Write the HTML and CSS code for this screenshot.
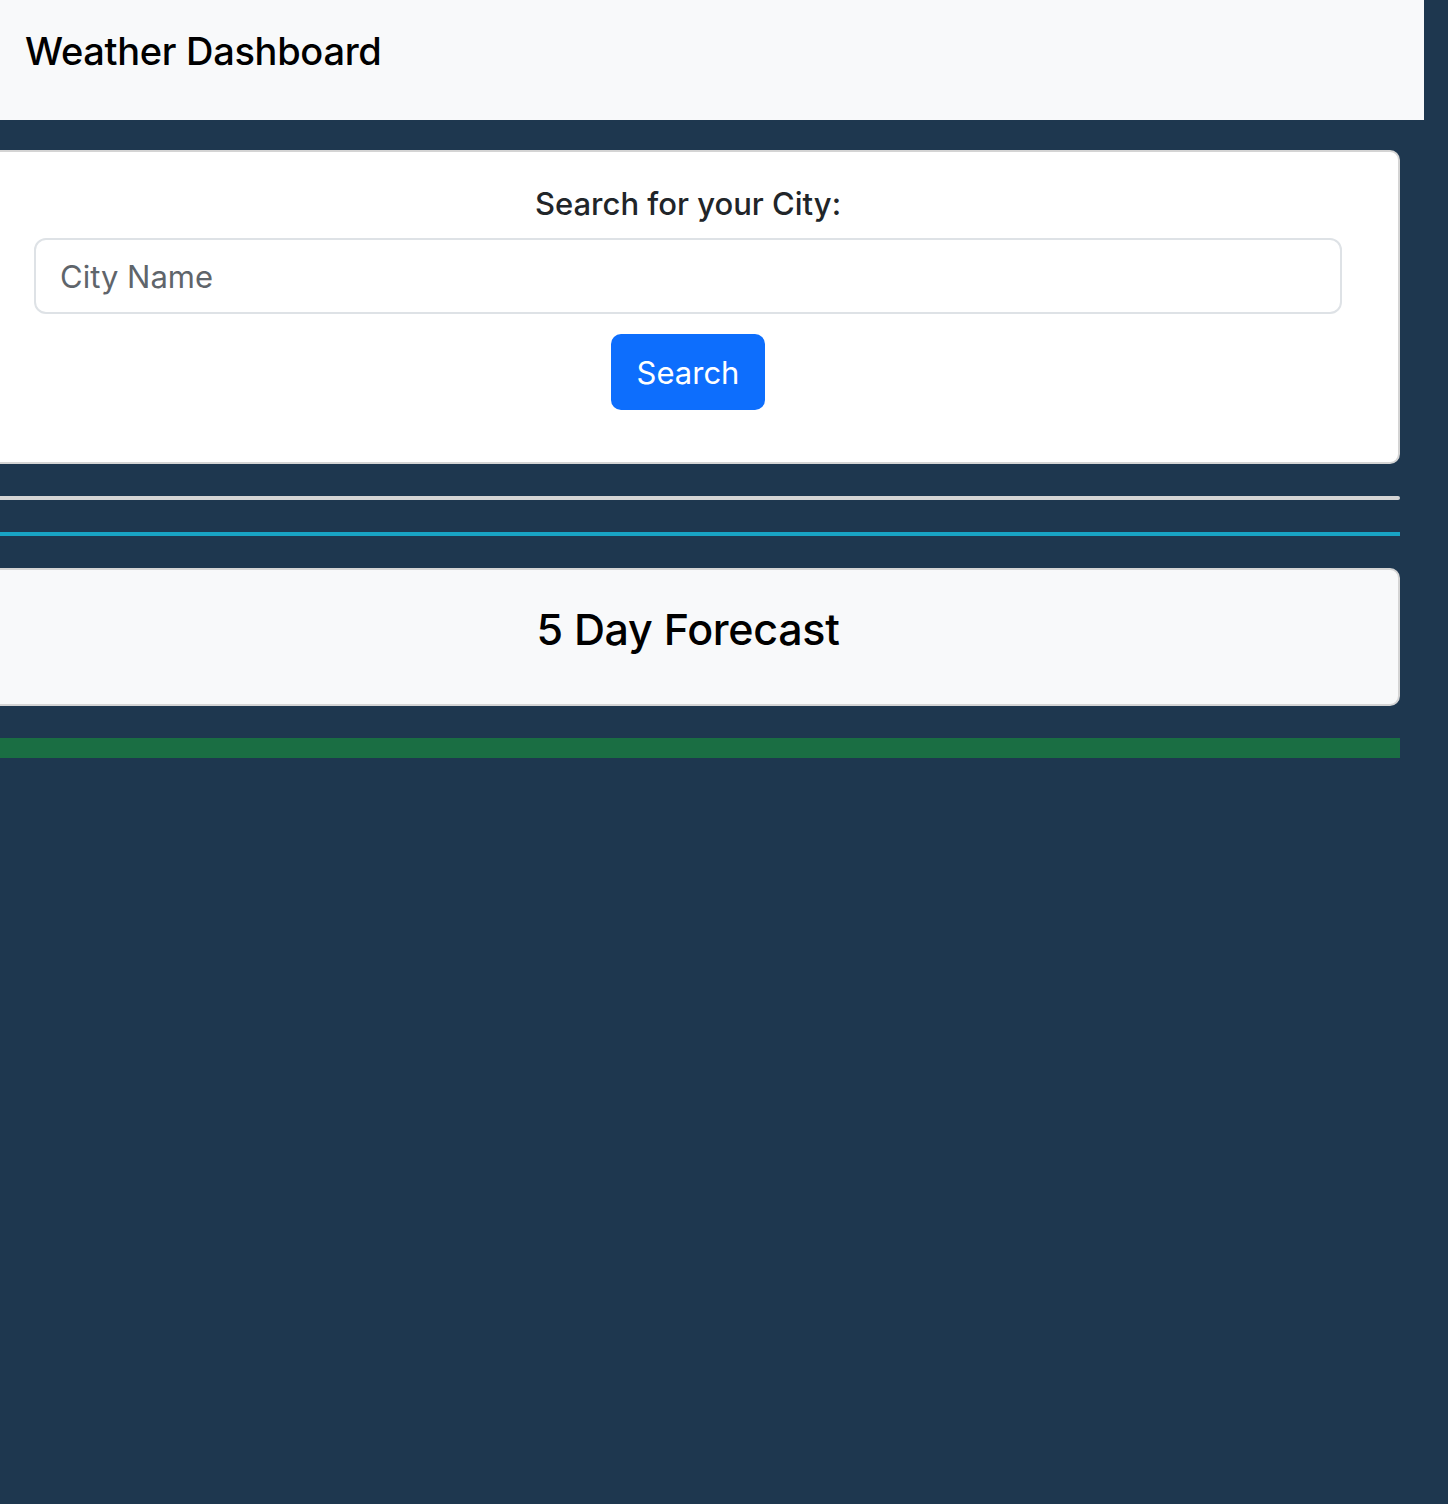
FILE: index.html
```html
<!DOCTYPE html>
<html lang="en">
<head>
<meta charset="utf-8">
<title>Weather Dashboard</title>
<link rel="stylesheet" href="styles.css">
</head>
<body>
<header class="navbar">
  <span class="brand">Weather Dashboard</span>
</header>
<main class="main">
  <section class="card card-search">
    <label class="search-label" for="city">Search for your City:</label>
    <input id="city" class="city-input" type="text" placeholder="City Name">
    <button class="btn-search" type="button">Search</button>
  </section>
  <div class="rule rule-gray"></div>
  <div class="rule rule-cyan"></div>
  <section class="card card-forecast">
    <h3 class="forecast-title">5 Day Forecast</h3>
  </section>
  <div class="green-bar"></div>
</main>
</body>
</html>
```

FILE: styles.css
```css
* { box-sizing: border-box; }

html, body {
  margin: 0;
  padding: 0;
}

body {
  background: #1e374f;
  font-family: Inter, "Noto Sans", "Liberation Sans", sans-serif;
  min-height: 1504px;
  overflow: hidden;
}

.navbar {
  width: 1424px;
  height: 120px;
  background: #f8f9fa;
  padding: 26px 0 0 25px;
}

.brand {
  display: block;
  font-size: 38px;
  font-weight: 500;
  line-height: 50px;
  color: #000;
  letter-spacing: -0.3px;
}

.main {
  width: 1424px;
  margin-left: -24px;
  padding-top: 30px;
}

.card {
  border: 2px solid #d4d4d4;
  border-radius: 10px;
}

.card-search {
  background: #fff;
  padding: 28px 56px 52px;
  text-align: center;
}

.search-label {
  display: block;
  font-size: 31px;
  font-weight: 500;
  line-height: 48px;
  color: #212529;
  margin-bottom: 10px;
}

.city-input {
  display: block;
  width: 100%;
  height: 76px;
  border: 2px solid #dee2e6;
  border-radius: 12px;
  padding: 0 24px;
  font-family: inherit;
  font-size: 31px;
  color: #212529;
  background: #fff;
  outline: none;
}

.city-input::placeholder {
  color: #5f656b;
}

.btn-search {
  display: inline-block;
  margin-top: 20px;
  width: 154px;
  height: 76px;
  border: none;
  border-radius: 10px;
  background: #0d6efd;
  color: #fff;
  font-family: inherit;
  font-size: 31px;
  padding: 0;
}

.rule {
  height: 4px;
  margin-top: 32px;
}

.rule-gray {
  background: #d4d4d4;
  border-radius: 2px;
}

.rule-cyan {
  background: #18a3c4;
}

.card-forecast {
  margin-top: 32px;
  height: 138px;
  background: #f8f9fa;
  display: flex;
  align-items: center;
  justify-content: center;
  padding-bottom: 16px;
}

.forecast-title {
  margin: 0;
  font-size: 43px;
  font-weight: 500;
  line-height: 52px;
  color: #000;
  letter-spacing: -0.3px;
}

.green-bar {
  margin-top: 32px;
  height: 20px;
  background: #1a6e43;
}
```
